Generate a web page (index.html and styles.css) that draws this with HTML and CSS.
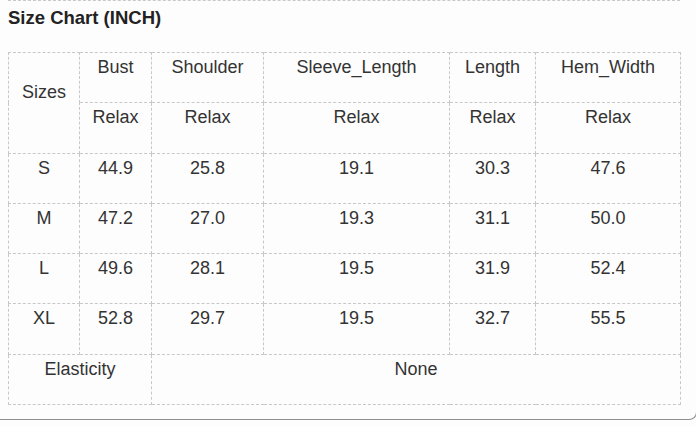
FILE: index.html
```html
<!DOCTYPE html>
<html>
<head>
<meta charset="utf-8">
<link rel="stylesheet" href="styles.css">
</head>
<body>
<div class="card">
  <div class="prev-line"></div>
  <h2 class="title">Size Chart (INCH)</h2>
  <table class="chart">
    <colgroup>
      <col class="c1"><col class="c2"><col class="c3"><col class="c4"><col class="c5"><col class="c6">
    </colgroup>
    <tr>
      <td rowspan="2">Sizes</td>
      <td>Bust</td><td>Shoulder</td><td>Sleeve_Length</td><td>Length</td><td>Hem_Width</td>
    </tr>
    <tr>
      <td>Relax</td><td>Relax</td><td>Relax</td><td>Relax</td><td>Relax</td>
    </tr>
    <tr><td>S</td><td>44.9</td><td>25.8</td><td>19.1</td><td>30.3</td><td>47.6</td></tr>
    <tr><td>M</td><td>47.2</td><td>27.0</td><td>19.3</td><td>31.1</td><td>50.0</td></tr>
    <tr><td>L</td><td>49.6</td><td>28.1</td><td>19.5</td><td>31.9</td><td>52.4</td></tr>
    <tr><td>XL</td><td>52.8</td><td>29.7</td><td>19.5</td><td>32.7</td><td>55.5</td></tr>
    <tr><td colspan="2">Elasticity</td><td colspan="4">None</td></tr>
  </table>
</div>
</body>
</html>
```

FILE: styles.css
```css
html, body {
  margin: 0;
  padding: 0;
  background: #fdfdfd;
}
body {
  font-family: "Liberation Sans", Arial, sans-serif;
  color: #333;
  overflow: hidden;
}
.card {
  margin-left: -12px;
  width: 709px;
  box-sizing: border-box;
  border: 1px solid #8e8e8e;
  border-top: none;
  border-radius: 0 0 8px 8px;
  padding: 0 0 14px 19px;
}
.prev-line {
  width: 672px;
  height: 0;
  border-bottom: 1px dashed #c8c8c8;
}
.title {
  margin: 7px 0 0;
  font-size: 18.5px;
  line-height: 20px;
  font-weight: bold;
  color: #222;
}
.chart {
  margin-top: 24px;
  border-collapse: collapse;
  table-layout: fixed;
  width: 673px;
}
.c1 { width: 71px; }
.c2 { width: 72px; }
.c3 { width: 112px; }
.c4 { width: 186px; }
.c5 { width: 86px; }
.c6 { width: 145px; }
.chart td {
  border: 1px dashed #c8c8c8;
  text-align: center;
  vertical-align: middle;
  font-size: 18px;
  line-height: 21.3px;
  padding: 4px 4px 24px;
  color: #333;
}
```
